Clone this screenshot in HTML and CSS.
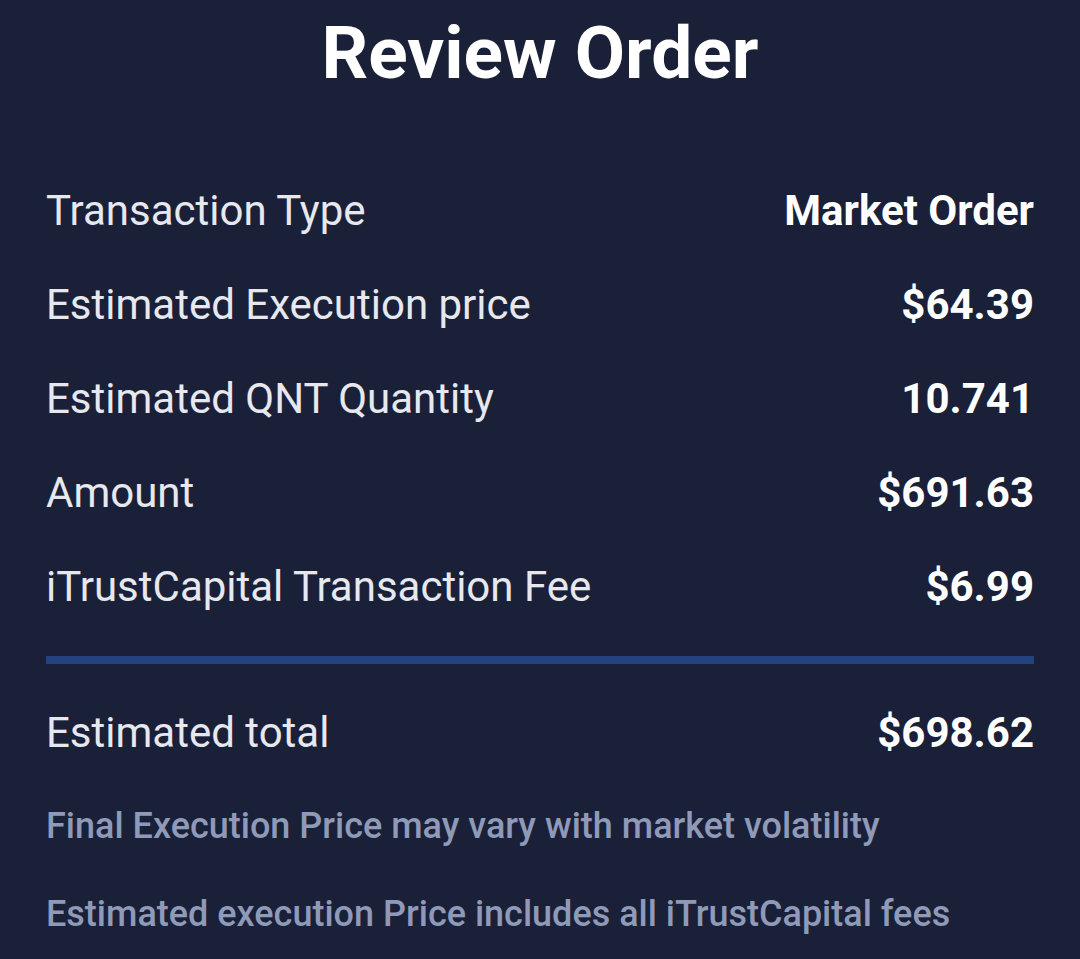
FILE: index.html
```html
<!DOCTYPE html>
<html lang="en">
<head>
<meta charset="utf-8">
<title>Review Order</title>
<link rel="stylesheet" href="styles.css">
</head>
<body>
<main class="review">
  <h1 class="title">Review Order</h1>
  <section class="details">
    <div class="row"><span class="label">Transaction Type</span><span class="value">Market Order</span></div>
    <div class="row"><span class="label">Estimated Execution price</span><span class="value">$64.39</span></div>
    <div class="row"><span class="label">Estimated QNT Quantity</span><span class="value">10.741</span></div>
    <div class="row"><span class="label">Amount</span><span class="value">$691.63</span></div>
    <div class="row"><span class="label">iTrustCapital Transaction Fee</span><span class="value">$6.99</span></div>
  </section>
  <hr class="divider">
  <div class="row total"><span class="label">Estimated total</span><span class="value">$698.62</span></div>
  <p class="note">Final Execution Price may vary with market volatility</p>
  <p class="note">Estimated execution Price includes all iTrustCapital fees</p>
</main>
</body>
</html>
```

FILE: styles.css
```css
html, body {
  margin: 0;
  padding: 0;
  background: #1b2039;
}
body {
  font-family: Roboto, "Noto Sans", Arial, sans-serif;
  color: #ffffff;
  height: 959px;
  overflow: hidden;
}
.review {
  padding: 0 46px;
}
.title {
  margin: 3px 0 0;
  font-size: 73px;
  line-height: 100px;
  font-weight: 700;
  text-align: center;
  color: #ffffff;
}
.details {
  margin-top: 61px;
}
.row {
  display: flex;
  justify-content: space-between;
  align-items: baseline;
  font-size: 42px;
  line-height: 94px;
}
.label {
  color: #e6e8ee;
  font-weight: 400;
}
.value {
  color: #ffffff;
  font-weight: 700;
}
.divider {
  margin: 22px 0 0;
  border: 0;
  height: 8px;
  background: #24427f;
}
.total {
  margin-top: 22px;
}
.note {
  margin: 0;
  font-size: 36px;
  line-height: 88px;
  font-weight: 500;
  color: #8e9ab8;
}
.total + .note {
  margin-top: 2px;
}
```
